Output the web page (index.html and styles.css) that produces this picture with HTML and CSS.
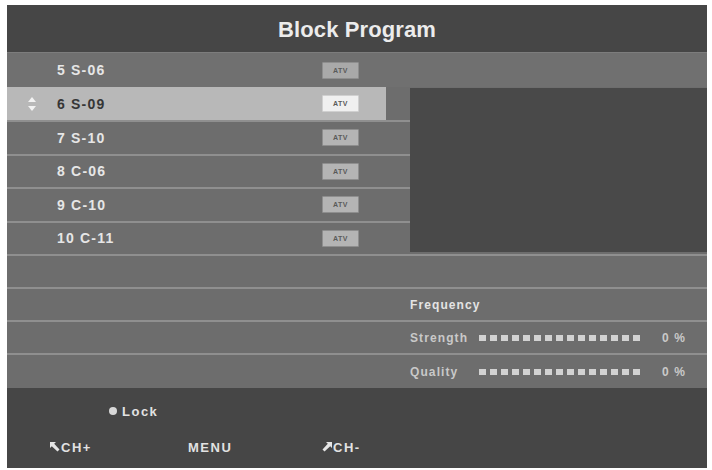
FILE: index.html
```html
<!DOCTYPE html>
<html>
<head>
<meta charset="utf-8">
<link rel="stylesheet" href="styles.css">
</head>
<body>
<div class="screen">
  <div class="header"><span class="title">Block Program</span></div>

  <div class="ch first">
    <span class="mark"></span><span class="name">5 S-06</span><span class="badge">ATV</span>
  </div>

  <div class="middle">
    <div class="list">
      <div class="ch selected">
        <div class="hl">
          <span class="mark">
            <svg width="8" height="14" viewBox="0 0 8 14"><path d="M4 0 L8 5 L0 5 Z" fill="#f2f2f2"/><path d="M0 9 L8 9 L4 14 Z" fill="#f2f2f2"/></svg>
          </span><span class="name">6 S-09</span><span class="badge">ATV</span>
        </div>
      </div>
      <div class="ch"><span class="mark"></span><span class="name">7 S-10</span><span class="badge">ATV</span></div>
      <div class="ch"><span class="mark"></span><span class="name">8 C-06</span><span class="badge">ATV</span></div>
      <div class="ch"><span class="mark"></span><span class="name">9 C-10</span><span class="badge">ATV</span></div>
      <div class="ch"><span class="mark"></span><span class="name">10 C-11</span><span class="badge">ATV</span></div>
    </div>
    <div class="preview-col"><div class="preview"></div></div>
  </div>

  <div class="sig"></div>
  <div class="sig"><span class="label bright">Frequency</span></div>
  <div class="sig">
    <span class="label">Strength</span>
    <span class="bar"><i></i><i></i><i></i><i></i><i></i><i></i><i></i><i></i><i></i><i></i><i></i><i></i><i></i><i></i><i></i></span>
    <span class="pct">0 %</span>
  </div>
  <div class="sig last">
    <span class="label">Quality</span>
    <span class="bar"><i></i><i></i><i></i><i></i><i></i><i></i><i></i><i></i><i></i><i></i><i></i><i></i><i></i><i></i><i></i></span>
    <span class="pct">0 %</span>
  </div>

  <div class="footer">
    <div class="lock"><span class="dot"></span><span>Lock</span></div>
    <div class="keys">
      <span class="key">
        <svg width="10" height="10" viewBox="0 0 10 10"><path d="M0 0 L6 0 L4.2 1.8 L9.5 7.5 L7.5 9.5 L1.8 4.2 L0 6 Z" fill="#e6e6e6"/></svg>CH+
      </span>
      <span class="key">MENU</span>
      <span class="key">
        <svg width="10" height="10" viewBox="0 0 10 10"><path d="M10 0 L4 0 L5.8 1.8 L0.5 7.5 L2.5 9.5 L8.2 4.2 L10 6 Z" fill="#e6e6e6"/></svg>CH-
      </span>
    </div>
  </div>
</div>
</body>
</html>
```

FILE: styles.css
```css
html, body {
  margin: 0;
  padding: 0;
  background: #ffffff;
}

.screen {
  margin: 5px 0 0 7px;
  width: 700px;
  height: 463px;
  background: #6d6d6d;
  font-family: "Liberation Sans", Arial, sans-serif;
  font-weight: bold;
  color: #e6e6e6;
  overflow: hidden;
}

.header {
  height: 47px;
  background: #464646;
  display: flex;
  align-items: center;
  justify-content: center;
}

.title {
  font-size: 22px;
  color: #ececec;
  letter-spacing: 0.1px;
  margin-top: 2px;
}

.ch {
  display: flex;
  align-items: center;
  box-sizing: border-box;
  height: 33.5px;
  padding-left: 21px;
  border-top: 2px solid #8f8f8f;
  font-size: 14px;
  letter-spacing: 1.2px;
}

.ch.first {
  height: 35px;
  border-top: 1px solid #7d7d7d;
  background: #707070;
}

.mark {
  width: 29px;
  display: flex;
  align-items: center;
}

.name {
  width: 265px;
}

.badge {
  width: 37px;
  height: 17px;
  box-sizing: border-box;
  display: flex;
  align-items: center;
  justify-content: center;
  font-size: 7px;
  letter-spacing: 0.5px;
  color: #5a5a5a;
  background: #b4b4b4;
  border: 1px solid #8e8e8e;
  border-radius: 1px;
}

.ch.first .badge {
  background: #a9a9a9;
}

.middle {
  display: grid;
  grid-template-columns: 403px 297px;
}

.ch.selected {
  height: 33px;
  border-top: none;
  padding-left: 0;
  align-items: stretch;
}

.hl {
  width: 379px;
  background: #b8b8b8;
  display: flex;
  align-items: center;
  padding-left: 21px;
  box-sizing: border-box;
  color: #363636;
}

.hl .badge {
  background: #f0f0f0;
  border-color: #d0d0d0;
}

.preview-col {
  padding: 1px 0 2px 0;
  display: flex;
}

.preview {
  flex: 1;
  background: #494949;
}

.sig {
  height: 33px;
  box-sizing: border-box;
  border-top: 2px solid #8f8f8f;
  padding-left: 403px;
  display: flex;
  align-items: center;
  font-size: 12px;
  letter-spacing: 1.1px;
}

.sig.last {
  height: 35px;
}

.label {
  width: 69px;
  color: #c9c9c9;
}

.label.bright {
  color: #e4e4e4;
}

.bar {
  display: flex;
  gap: 4px;
  width: 183px;
}

.bar i {
  display: block;
  width: 7px;
  height: 6px;
  background: #d2d2d2;
}

.pct {
  color: #c9c9c9;
}

.footer {
  height: 80px;
  background: #464646;
  box-sizing: border-box;
  padding-top: 15px;
  font-size: 13px;
  letter-spacing: 1.5px;
  color: #e2e2e2;
}

.lock {
  display: flex;
  align-items: center;
  height: 16px;
  padding-left: 102px;
}

.dot {
  width: 8px;
  height: 8px;
  border-radius: 50%;
  background: #d8d8d8;
  margin-right: 5px;
}

.keys {
  margin-top: 20px;
  height: 16px;
  display: grid;
  grid-template-columns: 138px 134px auto;
  padding-left: 43px;
  align-items: center;
}

.key {
  display: flex;
  align-items: center;
}

.key svg {
  margin-right: 1px;
}
```
